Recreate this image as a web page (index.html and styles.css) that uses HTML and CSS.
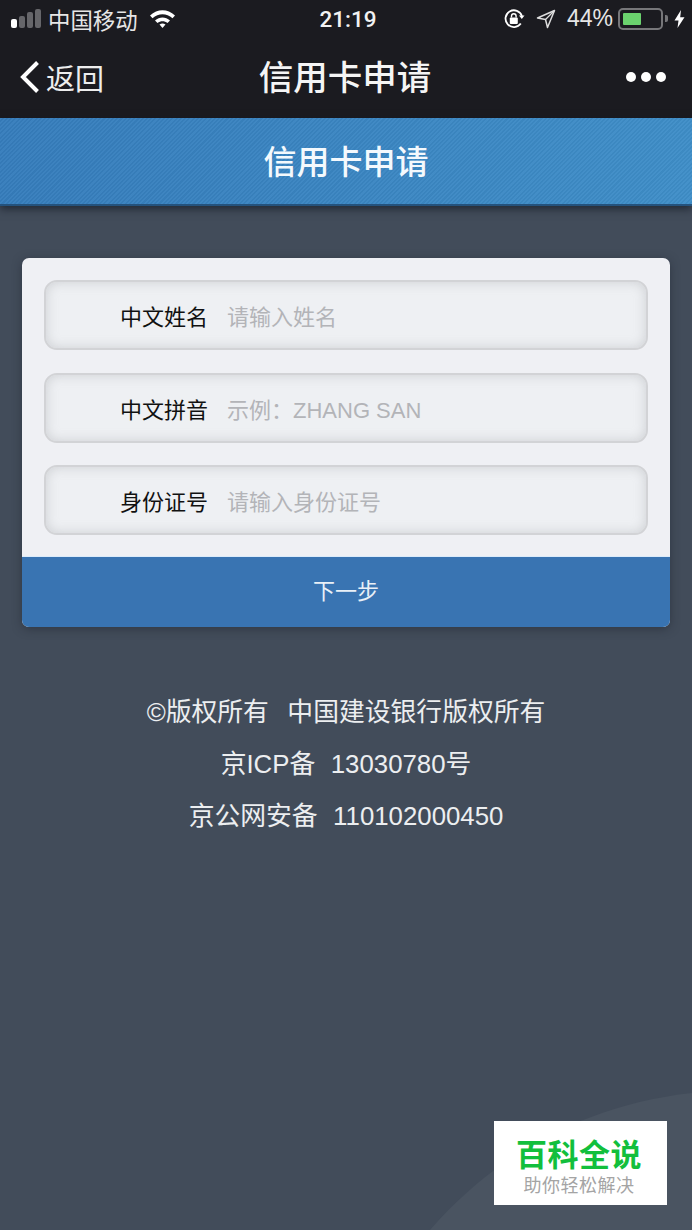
FILE: index.html
```html
<!DOCTYPE html>
<html lang="zh-CN">
<head>
  <meta charset="UTF-8">
  <title>信用卡申请</title>
  <link rel="stylesheet" href="styles.css">
</head>
<body>
  <div class="phone">
    <div class="statusbar">
      <div class="status-left">
        <span class="signal"><i class="on"></i><i></i><i></i><i></i></span>
        <span class="carrier">中国移动</span>
        <svg class="wifi" width="27" height="20" viewBox="0 0 26 20">
          <path d="M.5 6.500C8 -.5 18 -.5 25.500 6.500L23 9.200C17 4 9 4 3 9.200Z" fill="#fff"/>
          <path d="M5.500 11.400C10 7.500 16 7.500 20.500 11.400L18 14C15 11.600 11 11.600 8 14Z" fill="#fff"/>
          <path d="M10 15.500C12 14 14 14 16 15.500L13 19Z" fill="#fff"/>
        </svg>
      </div>
      <div class="clock">21:19</div>
      <div class="status-right">
        <svg width="22" height="22" viewBox="0 0 22 22" fill="none">
          <path d="M17.800 15.500A8.400 8.400 0 1 1 18.900 8" stroke="#fff" stroke-width="1.800"/>
          <path d="M16 7.500H21.500L18.800 11Z" fill="#fff"/>
          <rect x="6.800" y="9.500" width="8" height="6.500" rx="1" fill="#fff"/>
          <path d="M8.500 9.500V8A2.300 2.300 0 0 1 13.100 8V9.500" stroke="#fff" stroke-width="1.400"/>
        </svg>
        <svg class="arrow" width="20" height="20" viewBox="0 0 20 20" fill="none">
          <path d="M18.500 1.500L1.500 9L9.500 10.500L11.500 18.500Z" stroke="#ddd" stroke-width="1.500" stroke-linejoin="round"/>
          <path d="M18.500 1.500L9.500 10.500" stroke="#ddd" stroke-width="1.200"/>
        </svg>
        <span class="percent">44%</span>
        <span class="battery"><span class="level"></span></span>
        <span class="battery-tip"></span>
        <svg class="bolt" width="11" height="18" viewBox="0 0 11 18">
          <path d="M7 0L0.500 10.500H4.500L3.500 18L10.500 7.200H6.200Z" fill="#fff"/>
        </svg>
      </div>
    </div>

    <nav class="navbar">
      <div class="back">
        <svg width="22" height="34" viewBox="0 0 22 34" fill="none">
          <path d="M18.500 2.500L4 17L18.500 31.500" stroke="#fff" stroke-width="4"/>
        </svg>
        <span>返回</span>
      </div>
      <div class="nav-title">信用卡申请</div>
      <div class="dots"><i></i><i></i><i></i></div>
    </nav>

    <header class="banner">信用卡申请</header>

    <main class="content">
      <form class="card">
        <div class="fields">
          <div class="field">
            <span class="label">中文姓名</span>
            <span class="placeholder">请输入姓名</span>
          </div>
          <div class="field">
            <span class="label">中文拼音</span>
            <span class="placeholder">示例：ZHANG SAN</span>
          </div>
          <div class="field">
            <span class="label">身份证号</span>
            <span class="placeholder">请输入身份证号</span>
          </div>
        </div>
        <div class="next">下一步</div>
      </form>

      <footer class="copyright">
        <p>©版权所有&nbsp;&nbsp;&nbsp;中国建设银行版权所有</p>
        <p>京ICP备&nbsp;&nbsp;&nbsp;13030780号</p>
        <p>京公网安备&nbsp;&nbsp;&nbsp;110102000450</p>
      </footer>
    </main>

    <svg class="swoosh" width="692" height="230" viewBox="0 0 692 230">
      <path d="M430 230C490 160 580 105 692 93V230Z" fill="#4a5461"/>
    </svg>

    <div class="watermark">
      <div class="wm-title">百科全说</div>
      <div class="wm-sub">助你轻松解决</div>
    </div>
  </div>
</body>
</html>
```

FILE: styles.css
```css
* {
  box-sizing: border-box;
}

body {
  margin: 0;
  font-family: "Liberation Sans", "Noto Sans CJK SC", sans-serif;
  background: #424c5a;
}

.phone {
  position: relative;
  width: 692px;
  height: 1230px;
  overflow: hidden;
  background: #424c5a;
}

/* status bar */
.statusbar {
  display: flex;
  align-items: center;
  justify-content: space-between;
  height: 40px;
  padding: 0 7px 3px 11px;
  background: #1b1b20;
  color: #fff;
  position: relative;
}

.status-left,
.status-right {
  display: flex;
  align-items: center;
}

.signal {
  display: flex;
  align-items: flex-end;
  gap: 2px;
}

.signal i {
  width: 6px;
  height: 19px;
  border-radius: 2px;
  background: #66666a;
}

.signal i:nth-child(1) {
  height: 9px;
}

.signal i:nth-child(2) {
  height: 12px;
}

.signal i:nth-child(3) {
  height: 16px;
}

.signal i.on {
  background: #fff;
}

.carrier {
  margin-left: 7px;
  font-size: 22.4px;
  color: #e6e6e6;
}

.wifi {
  margin-left: 11px;
}

.clock {
  position: absolute;
  left: 4px;
  right: 0;
  text-align: center;
  font-family: Roboto, sans-serif;
  font-size: 22.500px;
  font-weight: 500;
  color: #f2f2f2;
}

.arrow {
  margin-left: 11px;
}

.percent {
  margin-left: 11px;
  font-size: 23px;
  color: #e6e6e6;
}

.battery {
  display: block;
  width: 45px;
  height: 22px;
  margin-left: 5px;
  padding: 3px;
  border: 2px solid #77777a;
  border-radius: 5px;
}

.level {
  display: block;
  width: 18px;
  height: 100%;
  border-radius: 1px;
  background: #6bd26e;
}

.battery-tip {
  width: 3px;
  height: 7px;
  margin-left: 2px;
  border-radius: 0 2px 2px 0;
  background: #77777a;
}

.bolt {
  margin-left: 6px;
}

/* wechat nav */
.navbar {
  position: relative;
  display: flex;
  align-items: center;
  justify-content: space-between;
  height: 78px;
  padding: 0 26px 4px 19px;
  background: #1b1b20;
  color: #fff;
}

.back {
  display: flex;
  align-items: center;
  gap: 5px;
  font-size: 29px;
  color: #ededed;
}

.nav-title {
  position: absolute;
  left: 0;
  right: 2px;
  margin-bottom: 4px;
  text-align: center;
  font-size: 34.500px;
  font-weight: 500;
  color: #f5f5f5;
}

.dots {
  display: flex;
  gap: 5px;
}

.dots i {
  width: 10px;
  height: 10px;
  border-radius: 50%;
  background: #fff;
}

/* blue banner */
.banner {
  height: 88px;
  line-height: 90px;
  text-align: center;
  font-size: 33px;
  font-weight: 500;
  color: #f4f9fd;
  background:
    repeating-linear-gradient(135deg, rgba(255, 255, 255, 0.03) 0 1.500px, rgba(0, 0, 0, 0.03) 1.500px 3px),
    linear-gradient(90deg, #367dbc 0%, #3f8ec8 100%);
  border-bottom: 2px solid #24527d;
  box-shadow: 0 3px 8px rgba(15, 22, 32, 0.65);
  position: relative;
}

.content {
  padding: 52px 22px 0;
}

.card {
  border-radius: 7px;
  overflow: hidden;
  background: #eff0f4;
  box-shadow: 0 2px 10px rgba(30, 36, 46, 0.5);
}

.fields {
  display: flex;
  flex-direction: column;
  gap: 22.500px;
  padding: 22px 22px 21px;
}

.field {
  display: flex;
  align-items: center;
  height: 70px;
  padding: 0 0 0 74px;
  border: 2px solid #d2d3d6;
  border-radius: 13px;
  background: #eef0f3;
  box-shadow: inset 0 0 12px rgba(150, 152, 158, 0.38);
}

.label {
  width: 107px;
  font-size: 22px;
  color: #111;
}

.placeholder {
  font-size: 22px;
  color: #b3b4b8;
}

.next {
  height: 71px;
  line-height: 69px;
  text-align: center;
  font-size: 22px;
  color: #e9f0f7;
  background: #3974b2;
  border-top: 1px solid #dcebfa;
}

.copyright {
  margin-top: 59px;
  text-align: center;
  font-size: 25.800px;
  word-spacing: -1px;
  color: #eceef0;
}

.copyright p {
  margin: 0;
  height: 52px;
  line-height: 52px;
}

.copyright p + p {
  word-spacing: -2px;
}

/* bottom decoration */
.swoosh {
  position: absolute;
  left: 0;
  bottom: 0;
}

.watermark {
  position: absolute;
  left: 494px;
  top: 1121px;
  width: 173px;
  height: 84px;
  padding: 16px 3px 0 0;
  text-align: center;
  background: #fff;
}

.wm-title {
  height: 38px;
  line-height: 38px;
  font-size: 31px;
  font-weight: bold;
  letter-spacing: 0.5px;
  color: #12bf3c;
}

.wm-sub {
  font-size: 18px;
  line-height: 23px;
  letter-spacing: 0.5px;
  color: #a4a4a4;
}
```
